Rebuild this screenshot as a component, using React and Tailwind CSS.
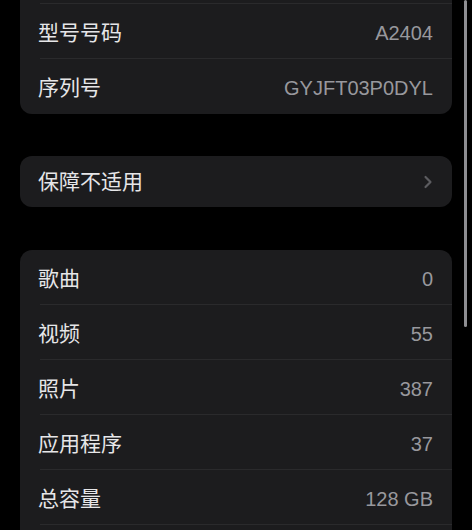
import { ChevronRight } from "lucide-react";

const storage = [
  ["歌曲", "0"],
  ["视频", "55"],
  ["照片", "387"],
  ["应用程序", "37"],
  ["总容量", "128 GB"],
];

function Row({ label, value, last }) {
  return (
    <div>
      <div className="flex items-center justify-between h-[54px] pt-[3px] pl-[18px] pr-[19px]">
        <span className="text-[21px] text-[#e6e6e8]">{label}</span>
        <span className="text-[20px] text-[#98989d]">{value}</span>
      </div>
      {!last && <div className="ml-[20px] h-px bg-[#2a2a2c]" />}
    </div>
  );
}

export default function App() {
  return (
    <div
      className="relative h-[530px] w-full overflow-hidden bg-black px-[20px]"
      style={{ fontFamily: '"Liberation Sans", "Noto Sans CJK SC", sans-serif' }}
    >
      {/* device info, scrolled past the top */}
      <div className="rounded-b-[12px] bg-[#1c1c1e]">
        <div className="h-[3px]" />
        <div className="ml-[20px] h-px bg-[#2a2a2c]" />
        <Row label="型号号码" value="A2404" />
        <Row label="序列号" value="GYJFT03P0DYL" last />
        <div className="h-[1px]" />
      </div>

      {/* warranty */}
      <div className="mt-[42px] rounded-[12px] bg-[#1c1c1e]">
        <div className="flex items-center justify-between h-[51px] pl-[18px] pr-[19px]">
          <span className="text-[21px] text-[#e6e6e8]">保障不适用</span>
          <ChevronRight size={20} strokeWidth={2.6} className="text-[#5c5c60] -mr-[5px]" />
        </div>
      </div>

      {/* storage counts */}
      <div className="mt-[43px] rounded-[12px] bg-[#1c1c1e]">
        {storage.map(([label, value]) => (
          <Row key={label} label={label} value={value} />
        ))}
        <div className="h-[40px]" />
      </div>

      {/* scroll indicator */}
      <div className="absolute right-[5px] top-0 h-[327px] w-[3px] rounded-full bg-[#8e8e92]" />
    </div>
  );
}
